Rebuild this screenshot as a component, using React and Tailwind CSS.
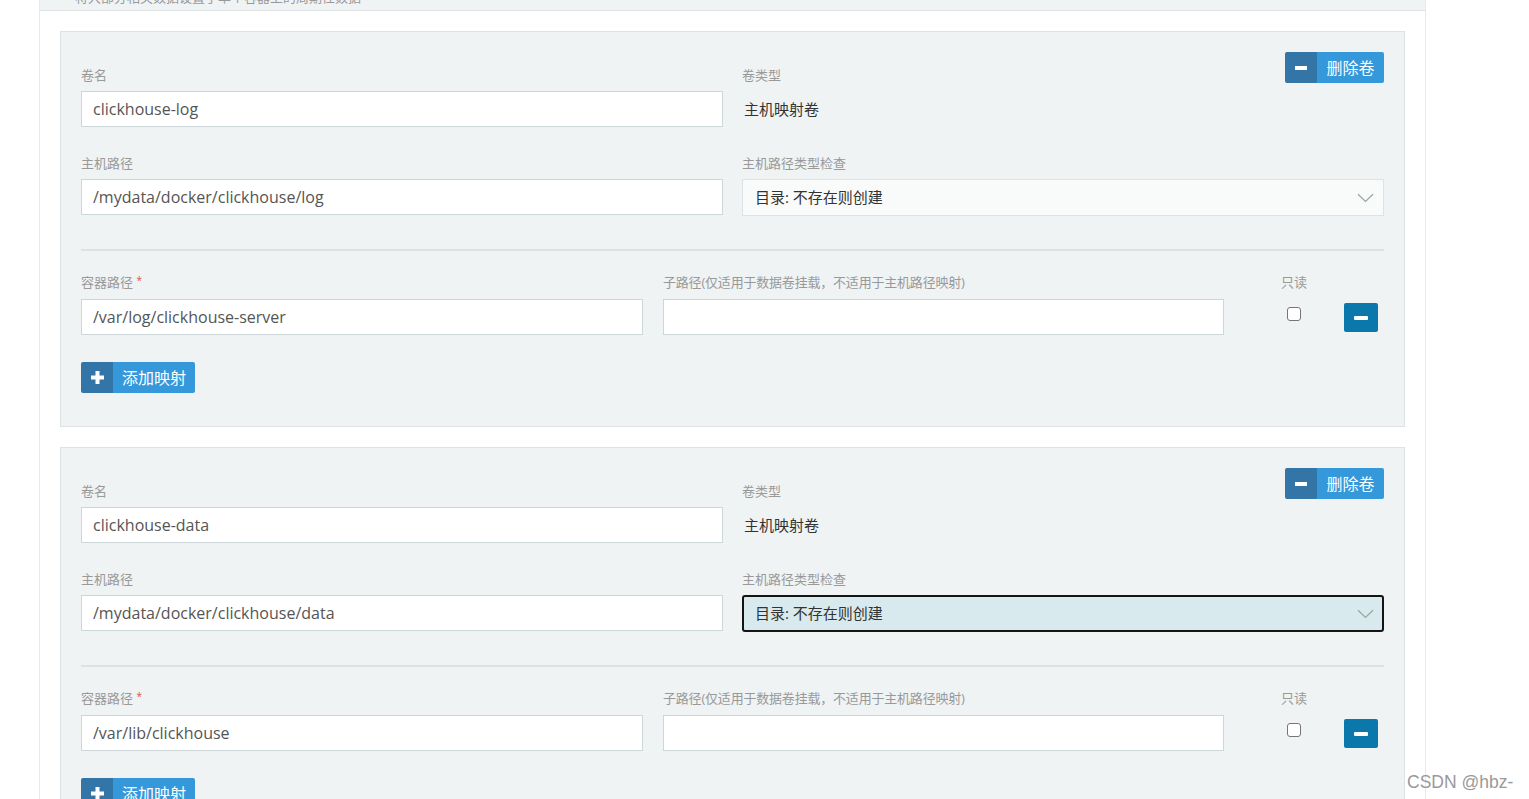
import React from "react";

const FONT = "font-['Open_Sans','Noto_Sans_CJK_SC',sans-serif]";

function Label({ children, className = "" }) {
  return (
    <div className={`h-[18px] text-[13px] leading-[18px] text-[#999] whitespace-nowrap ${className}`}>
      {children}
    </div>
  );
}

function TextInput({ value }) {
  return (
    <input
      readOnly
      value={value}
      className={`${FONT} block h-9 w-full border border-[#cdd6d9] bg-white pl-[11px] text-[16px] text-[#555] outline-none`}
    />
  );
}

function Chevron() {
  return (
    <svg width="17" height="10" viewBox="0 0 17 10" fill="none">
      <path d="M1 1.2 L8.5 8.5 L16 1.2" stroke="#9aa3a6" strokeWidth="1.2" />
    </svg>
  );
}

function Select({ focused }) {
  const cls = focused
    ? "border-2 border-[#141414] rounded-[3px] bg-[#d8eaed] pl-[11px] pr-[8px]"
    : "border border-[#dce3e5] bg-[#f9fbfb] pl-3 pr-[9px]";
  return (
    <div className={`flex h-[37px] items-center justify-between ${cls}`}>
      <span className="text-[15px] text-[#333]">目录: 不存在则创建</span>
      <Chevron />
    </div>
  );
}

function DeleteButton() {
  return (
    <div className="flex h-[31px] overflow-hidden rounded-[2px] text-white">
      <div className="flex w-[32px] items-center justify-center bg-[#3375a7]">
        <div className="h-[4px] w-[12px] bg-white" />
      </div>
      <div className="flex w-[67px] items-center justify-center bg-[#3498db] text-[16px]">删除卷</div>
    </div>
  );
}

function AddButton() {
  return (
    <div className="flex h-[31px] w-[114px] overflow-hidden rounded-[2px] text-white">
      <div className="flex w-[32px] items-center justify-center bg-[#3375a7]">
        <svg width="13" height="13" viewBox="0 0 13 13">
          <rect x="4.5" y="0" width="4" height="13" fill="#fff" />
          <rect x="0" y="4.5" width="13" height="4" fill="#fff" />
        </svg>
      </div>
      <div className="flex flex-1 items-center justify-center bg-[#3498db] text-[16px]">添加映射</div>
    </div>
  );
}

function Volume({ name, hostPath, containerPath, focused }) {
  return (
    <div className="mb-5 border border-[#dce3e5] bg-[#eff3f4] px-5 pt-5 pb-[33px]">
      <div className="flex gap-[19px]">
        <div className="w-[642px] pt-[14px]">
          <Label className="mb-[7px]">卷名</Label>
          <TextInput value={name} />
        </div>
        <div className="flex w-[642px] justify-between">
          <div className="pt-[14px]">
            <Label className="mb-[7px]">卷类型</Label>
            <div className="flex h-9 items-center pl-[2px] text-[15px] text-[#333]">主机映射卷</div>
          </div>
          <DeleteButton />
        </div>
      </div>

      <div className="mt-[27px] flex gap-[19px]">
        <div className="w-[642px]">
          <Label className="mb-[7px]">主机路径</Label>
          <TextInput value={hostPath} />
        </div>
        <div className="w-[642px]">
          <Label className="mb-[7px]">主机路径类型检查</Label>
          <Select focused={focused} />
        </div>
      </div>

      <div className="mt-[33px] h-[2px] bg-[#dde3e5]" />

      <div className="mt-[22px] flex">
        <div className="w-[562px]">
          <Label className="mb-[8px]">
            容器路径 <span className="relative -top-[3px] text-[10px] text-[#e74c3c]">*</span>
          </Label>
          <TextInput value={containerPath} />
        </div>
        <div className="ml-5 w-[561px]">
          <Label className="mb-[8px] tracking-[-0.2px]">子路径(仅适用于数据卷挂载，不适用于主机路径映射)</Label>
          <TextInput value="" />
        </div>
        <div className="ml-5 flex w-[100px] flex-col items-center">
          <Label className="mb-[8px]">只读</Label>
          <div className="pt-[8px]">
            <div className="h-[14px] w-[14px] rounded-[3px] border border-[#767676] bg-white" />
          </div>
        </div>
        <div className="w-[40px] pt-[30px]">
          <div className="flex h-[29px] w-[34px] items-center justify-center rounded-[2px] bg-[#0a78aa]">
            <div className="h-[4px] w-[14px] rounded-[1px] bg-white" />
          </div>
        </div>
      </div>

      <div className="mt-[27px]">
        <AddButton />
      </div>
    </div>
  );
}

export default function App() {
  return (
    <div className={`${FONT} relative h-[799px] w-full overflow-hidden bg-white`}>
      <div className="ml-[39px] min-h-[799px] w-[1387px] border-x border-[#e6eaeb]">
        <div className="h-[11px] overflow-hidden border-b border-[#dde3e5] bg-[#eff3f4] pl-[35px]">
          <div className="-mt-[12px] text-[13px] leading-[18px] text-[#999]">
            将大部分相关数据设置了单个容器上的周期性数据
          </div>
        </div>
        <div className="px-5 pt-5">
          <Volume
            name="clickhouse-log"
            hostPath="/mydata/docker/clickhouse/log"
            containerPath="/var/log/clickhouse-server"
          />
          <Volume
            name="clickhouse-data"
            hostPath="/mydata/docker/clickhouse/data"
            containerPath="/var/lib/clickhouse"
            focused
          />
        </div>
      </div>
      <div className="absolute left-[1407px] top-[772px] font-['Liberation_Sans',Arial,sans-serif] text-[17.5px] leading-[20px] text-[#999]">
        CSDN @hbz-
      </div>
    </div>
  );
}
